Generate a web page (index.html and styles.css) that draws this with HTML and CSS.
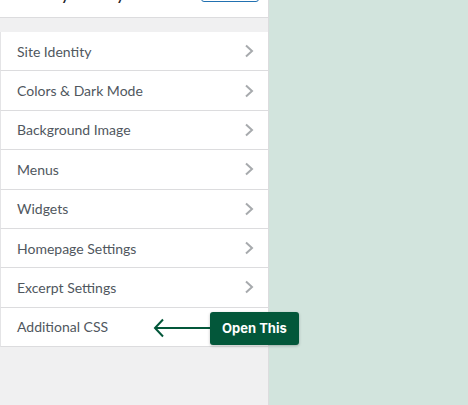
FILE: index.html
```html
<!DOCTYPE html>
<html>
<head>
<meta charset="utf-8">
<link rel="stylesheet" href="styles.css">
</head>
<body>
<div class="page">
  <aside class="panel">
    <div class="theme">
      <span class="theme-name">Twenty Twenty-One</span>
      <span class="change-btn"></span>
    </div>
    <div class="gap"></div>
    <ul class="sections">
      <li class="row"><span>Site Identity</span><svg class="chev" viewBox="0 0 10 14"><polyline points="2,1.5 8,7 2,12.5"/></svg></li>
      <li class="row"><span>Colors &amp; Dark Mode</span><svg class="chev" viewBox="0 0 10 14"><polyline points="2,1.5 8,7 2,12.5"/></svg></li>
      <li class="row"><span>Background Image</span><svg class="chev" viewBox="0 0 10 14"><polyline points="2,1.5 8,7 2,12.5"/></svg></li>
      <li class="row"><span>Menus</span><svg class="chev" viewBox="0 0 10 14"><polyline points="2,1.5 8,7 2,12.5"/></svg></li>
      <li class="row"><span>Widgets</span><svg class="chev" viewBox="0 0 10 14"><polyline points="2,1.5 8,7 2,12.5"/></svg></li>
      <li class="row"><span>Homepage Settings</span><svg class="chev" viewBox="0 0 10 14"><polyline points="2,1.5 8,7 2,12.5"/></svg></li>
      <li class="row"><span>Excerpt Settings</span><svg class="chev" viewBox="0 0 10 14"><polyline points="2,1.5 8,7 2,12.5"/></svg></li>
      <li class="row"><span>Additional CSS</span><svg class="chev" viewBox="0 0 10 14"><polyline points="2,1.5 8,7 2,12.5"/></svg>
        <div class="callout">
          <svg class="arrow" viewBox="0 0 57 20"><polyline points="10,1.5 2,10 10,18.5"/><line x1="2" y1="10" x2="57" y2="10"/></svg>
          <span class="badge">Open This</span>
        </div>
      </li>
    </ul>
  </aside>
  <main class="preview"></main>
</div>
</body>
</html>
```
FILE: styles.css
```css
* { box-sizing: border-box; }
html, body { margin: 0; padding: 0; }
body {
  width: 468px;
  height: 405px;
  overflow: hidden;
  font-family: Lato, "Noto Sans", sans-serif;
}
.page {
  display: flex;
  height: 405px;
}
.panel {
  width: 269px;
  background: #f0f0f1;
  border-right: 1px solid #dcdcde;
  display: flex;
  flex-direction: column;
}
.preview {
  flex: 1;
  background: #d2e4dd;
}
.theme {
  height: 18px;
  background: #fff;
  border-bottom: 1px solid #dcdcde;
  display: flex;
  justify-content: space-between;
  align-items: flex-end;
  padding: 0 9px 14px 17px;
  overflow: hidden;
}
.theme-name {
  font-size: 16px;
  font-weight: 600;
  color: #1d2327;
  line-height: 18px;
  white-space: nowrap;
}
.change-btn {
  width: 58px;
  height: 30px;
  border: 1px solid #2271b1;
  border-radius: 3px;
  margin-bottom: 1px;
}
.gap { height: 14px; }
.sections {
  list-style: none;
  margin: 0;
  padding: 0;
  background: #fff;
}
.row {
  height: 39.375px;
  border-bottom: 1px solid #dcdcde;
  border-left: 1px solid #e4e4e6;
  display: flex;
  align-items: center;
  justify-content: space-between;
  padding: 0 14px 0 16px;
  font-size: 14px;
  color: #50575e;
  position: relative;
}
.chev {
  width: 10px;
  height: 14px;
  fill: none;
  stroke: #a7aaad;
  stroke-width: 2;
}
.callout {
  position: absolute;
  left: 152px;
  top: 4px;
  display: flex;
  align-items: center;
  white-space: nowrap;
}
.arrow {
  width: 57px;
  height: 20px;
  fill: none;
  stroke: #03573a;
  stroke-width: 2;
}
.badge {
  background: #03573a;
  color: #fff;
  font-family: Inter, "Noto Sans", sans-serif;
  font-weight: 700;
  font-size: 13px;
  height: 33px;
  line-height: 33px;
  padding: 0 12px;
  border-radius: 3px;
  box-shadow: 0 1px 3px rgba(0,0,0,0.25);
}
```
